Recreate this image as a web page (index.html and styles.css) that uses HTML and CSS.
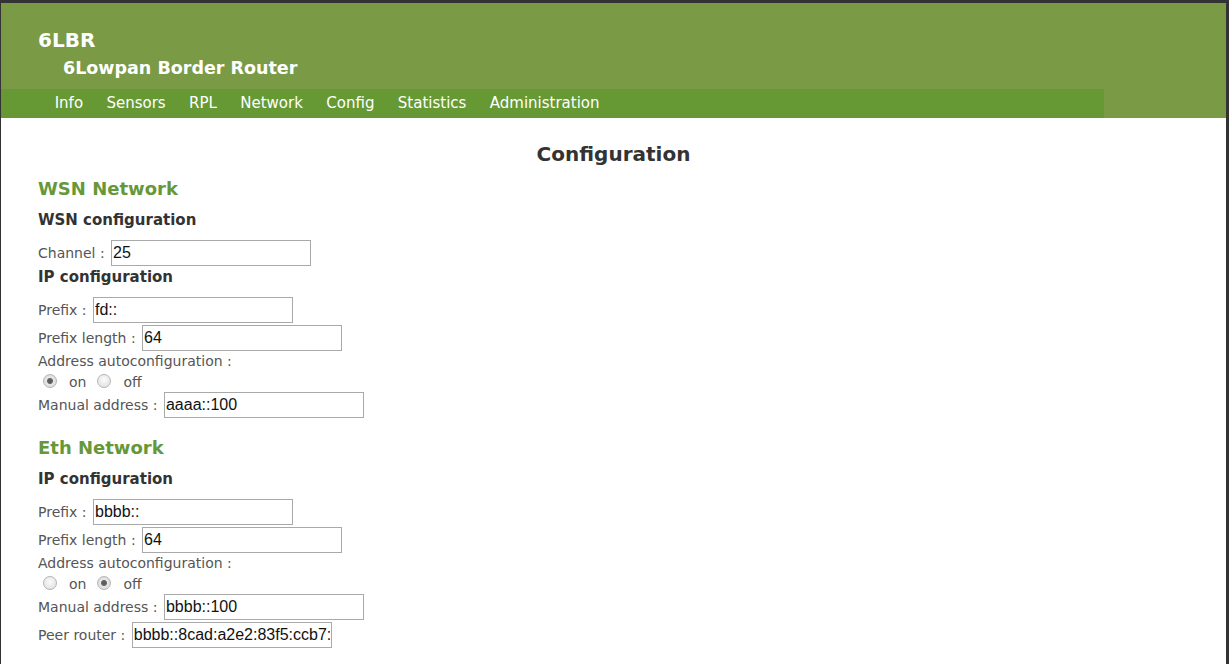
FILE: index.html
```html
<!DOCTYPE html>
<html lang="en">
<head>
    <meta charset="UTF-8">
    <title>6LBR - Configuration</title>
    <link rel="stylesheet" href="styles.css">
</head>
<body>
    <div class="window">
        <div class="header">
            <h1>6LBR</h1>
            <div class="subtitle">6Lowpan Border Router</div>
            <div class="menu">
                <a href="#">Info</a>
                <a href="#">Sensors</a>
                <a href="#">RPL</a>
                <a href="#">Network</a>
                <a href="#">Config</a>
                <a href="#">Statistics</a>
                <a href="#">Administration</a>
            </div>
        </div>

        <div class="content">
            <h2 class="page-title">Configuration</h2>

            <form>
                <!-- WSN side -->
                <h3>WSN Network</h3>
                <h4>WSN configuration</h4>
                <div class="field">Channel : <input type="text" value="25"></div>

                <h4>IP configuration</h4>
                <div class="field">Prefix : <input type="text" value="fd::"></div>
                <div class="field">Prefix length : <input type="text" value="64"></div>
                <div class="line">Address autoconfiguration :</div>
                <div class="choice">
                    <input type="radio" name="wsn_auto" checked><span>on</span>
                    <input type="radio" name="wsn_auto"><span>off</span>
                </div>
                <div class="field">Manual address : <input type="text" value="aaaa::100"></div>

                <!-- Ethernet side -->
                <h3 class="next">Eth Network</h3>
                <h4>IP configuration</h4>
                <div class="field">Prefix : <input type="text" value="bbbb::"></div>
                <div class="field">Prefix length : <input type="text" value="64"></div>
                <div class="line">Address autoconfiguration :</div>
                <div class="choice">
                    <input type="radio" name="eth_auto"><span>on</span>
                    <input type="radio" name="eth_auto" checked><span>off</span>
                </div>
                <div class="field">Manual address : <input type="text" value="bbbb::100"></div>
                <div class="field">Peer router : <input type="text" value="bbbb::8cad:a2e2:83f5:ccb7:9e2d"></div>
            </form>
        </div>
    </div>
</body>
</html>
```

FILE: styles.css
```css
html, body {
    margin: 0;
    height: 100%;
}

body {
    font-family: 'DejaVu Sans', Verdana, sans-serif;
    background: #333;
    color: #333;
}

.window {
    box-sizing: border-box;
    min-height: 100%;
    border-top: 3px solid #333;
    border-left: 1px solid #333;
    border-right: 3px solid #333;
    background: #fff;
}

.header {
    background-color: #7a9a45;
    padding-top: 25px;
}

.header h1 {
    margin: 0 0 0 37px;
    font-size: 20px;
    line-height: 24px;
    color: #fff;
}

.subtitle {
    margin: 6px 0 0 62px;
    font-size: 17.5px;
    line-height: 20px;
    font-weight: bold;
    color: #fff;
}

.menu {
    width: 90%;
    height: 29px;
    margin-top: 11px;
    padding-left: 42px;
    box-sizing: border-box;
    background-color: #669933;
    display: flex;
}

.menu a {
    padding: 0 11.7px;
    font-size: 15px;
    line-height: 28px;
    color: #fff;
    text-decoration: none;
}

.content {
    padding: 24px 37px 20px;
}

.page-title {
    margin: 0 0 11px;
    text-align: center;
    font-size: 20px;
    line-height: 24px;
}

h3 {
    margin: 0 0 10px;
    font-size: 18px;
    line-height: 24px;
    color: #66983a;
}

h3.next {
    margin-top: 18px;
}

h4 {
    margin: 0 0 11px;
    font-size: 15px;
    line-height: 18px;
}

.field {
    display: flex;
    align-items: center;
    gap: 2px;
    margin-bottom: 2px;
    font-size: 14px;
    color: #555;
    white-space: pre;
}

.field input {
    width: 200px;
    height: 26px;
    box-sizing: border-box;
    margin: 0;
    padding: 1px 1px;
    border: 1px solid #a9a9a9;
    font-family: 'Liberation Sans', Arial, sans-serif;
    font-size: 16px;
    color: #111;
}

.line {
    font-size: 14px;
    line-height: 17px;
    color: #555;
}

.choice {
    display: flex;
    align-items: center;
    height: 22px;
    font-size: 14px;
    color: #555;
}

.choice input {
    appearance: none;
    width: 14px;
    height: 14px;
    margin: 0 0 0 5px;
    border: 1px solid #b4b4b4;
    border-radius: 50%;
    background: radial-gradient(circle at 50% 40%, #fbfbfb, #dcdcdc);
    box-sizing: border-box;
}

.choice input:checked {
    background: radial-gradient(circle, #555 0, #666 2.5px, #e6e6e6 3.5px, #d6d6d6 100%);
}

.choice span {
    margin: 0 6px 0 12px;
    position: relative;
    top: 1px;
}
```
